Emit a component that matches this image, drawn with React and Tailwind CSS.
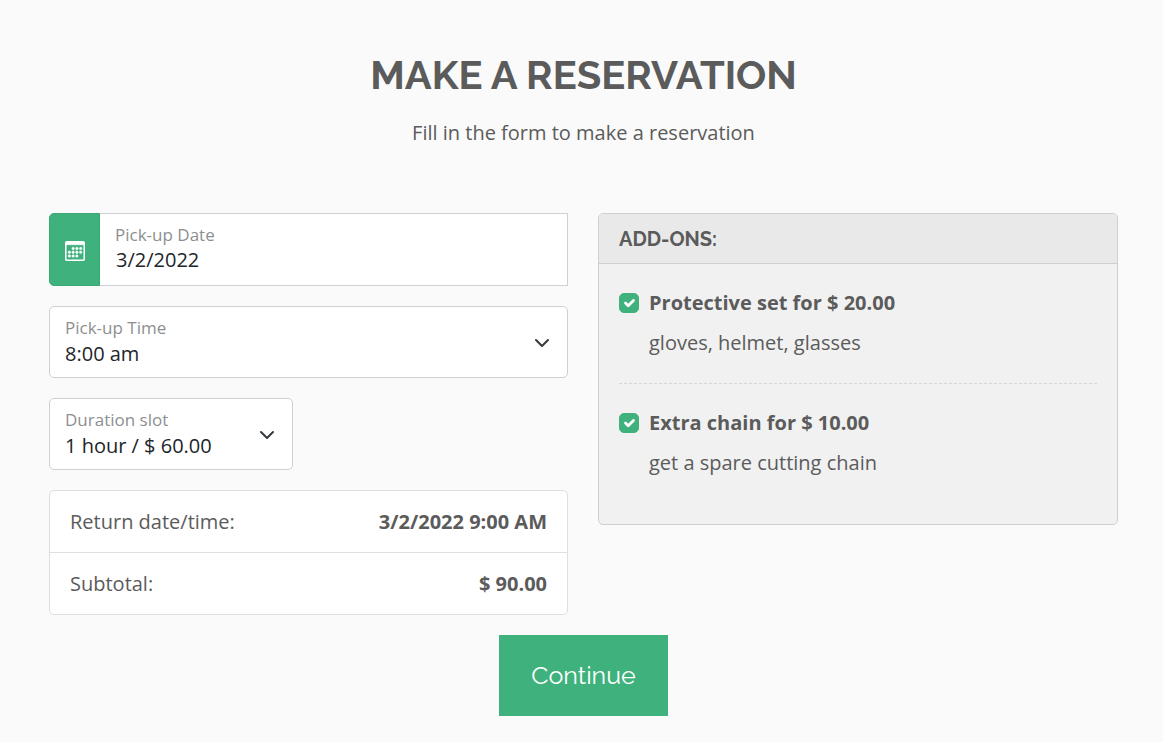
import { useState } from "react";
import { BsCalendar3 } from "react-icons/bs";

const ADD_ONS = [
  {
    id: "protective-set",
    title: "Protective set for $ 20.00",
    note: "gloves, helmet, glasses",
  },
  {
    id: "extra-chain",
    title: "Extra chain for $ 10.00",
    note: "get a spare cutting chain",
  },
];

const SUMMARY = [
  { label: "Return date/time:", value: "3/2/2022 9:00 AM" },
  { label: "Subtotal:", value: "$ 90.00" },
];

function FloatingLabel({ htmlFor, children }) {
  return (
    <label
      htmlFor={htmlFor}
      className="pointer-events-none absolute top-[9px] left-[15px] text-[17px] leading-6 text-[#8d8f91]"
    >
      {children}
    </label>
  );
}

function DateField() {
  const [date, setDate] = useState("3/2/2022");
  return (
    <div className="flex h-[73px]">
      <button
        type="button"
        aria-label="Open calendar"
        className="flex w-[51px] items-center justify-center rounded-l-[5px] border border-[#3aa775] bg-[#3eb17c] text-white"
      >
        <BsCalendar3 size={20} className="mt-[3px] stroke-white [stroke-width:0.4px]" />
      </button>
      <div className="relative grow border border-l-0 border-[#ced0d4] bg-white">
        <FloatingLabel htmlFor="pickup-date">Pick-up Date</FloatingLabel>
        <input
          id="pickup-date"
          type="text"
          value={date}
          onChange={(e) => setDate(e.target.value)}
          className="h-full w-full bg-transparent px-4 pt-5 text-[20px] text-[#212529] outline-none"
        />
      </div>
    </div>
  );
}

function SelectField({ id, label, options, className }) {
  return (
    <div
      className={`relative h-[72px] rounded-[5px] border border-[#ced0d4] bg-white ${className}`}
    >
      <FloatingLabel htmlFor={id}>{label}</FloatingLabel>
      <select
        id={id}
        className="h-full w-full appearance-none bg-transparent pt-[23px] pr-10 pl-[15px] text-[20px] text-[#212529] outline-none"
      >
        {options.map((option) => (
          <option key={option}>{option}</option>
        ))}
      </select>
      <svg
        viewBox="0 0 16 16"
        aria-hidden="true"
        className="pointer-events-none absolute top-7 right-[17px] size-4"
      >
        <path
          d="m2 5 6 6 6-6"
          fill="none"
          stroke="#343a40"
          strokeWidth="2"
          strokeLinecap="round"
          strokeLinejoin="round"
        />
      </svg>
    </div>
  );
}

function AddOn({ id, title, note }) {
  return (
    <li className="border-t border-dashed border-[#d6d6d6] pt-6 pb-[25px] first:border-t-0">
      <div className="flex items-center gap-[10px]">
        <span className="grid size-5 shrink-0">
          <input
            id={id}
            type="checkbox"
            defaultChecked
            className="peer col-start-1 row-start-1 size-5 appearance-none rounded-[5px] border border-[#bbb] bg-white checked:border-[#3eb17c] checked:bg-[#3eb17c]"
          />
          <svg
            viewBox="0 0 20 20"
            aria-hidden="true"
            className="pointer-events-none invisible col-start-1 row-start-1 size-5 peer-checked:visible"
          >
            <path
              d="m6.5 10 2.7 2.7 5.3-5.3"
              fill="none"
              stroke="#fff"
              strokeWidth="2.8"
              strokeLinecap="round"
              strokeLinejoin="round"
            />
          </svg>
        </span>
        <label htmlFor={id} className="leading-[30px] font-bold">
          {title}
        </label>
      </div>
      <p className="mt-[10px] pl-[30px] leading-[30px]">{note}</p>
    </li>
  );
}

export default function App() {
  return (
    <main className="min-h-screen bg-[#fafafa] pt-[46px] pr-[45px] pb-[26px] pl-[49px] font-['Open_Sans','Noto_Sans',sans-serif] text-[20px] text-[#5b5b5b]">
      <header className="text-center">
        <h1 className="font-['Raleway','Lato',sans-serif] text-[40px] leading-[58px] font-bold">
          MAKE A RESERVATION
        </h1>
        <p className="mt-[14px] leading-[30px]">
          Fill in the form to make a reservation
        </p>
      </header>

      <form onSubmit={(e) => e.preventDefault()} className="mt-[65px]">
        <div className="grid grid-cols-[519fr_520fr] items-start gap-[30px]">
          <div className="flex flex-col gap-5">
            <DateField />
            <SelectField
              id="pickup-time"
              label="Pick-up Time"
              options={["8:00 am", "9:00 am", "10:00 am"]}
              className="w-full"
            />
            <SelectField
              id="duration"
              label="Duration slot"
              options={["1 hour / $ 60.00", "2 hours / $ 120.00"]}
              className="w-[244px]"
            />
            <dl className="divide-y divide-[#dfdfdf] rounded-[5px] border border-[#dfdfdf] bg-white">
              {SUMMARY.map((row) => (
                <div
                  key={row.label}
                  className="flex justify-between px-5 pt-4 pb-[15px] leading-[30px]"
                >
                  <dt>{row.label}</dt>
                  <dd className="font-bold">{row.value}</dd>
                </div>
              ))}
            </dl>
          </div>

          <section className="overflow-hidden rounded-[5px] border border-[#cfcfcf] bg-[#f1f1f1]">
            <h2 className="border-b border-[#cfcfcf] bg-[#e9e9e9] px-5 pt-[11px] pb-[9px] font-['Raleway','Lato',sans-serif] leading-[29px] font-bold">
              ADD-ONS:
            </h2>
            <ul className="px-5 pb-[21px]">
              {ADD_ONS.map((item) => (
                <AddOn key={item.id} {...item} />
              ))}
            </ul>
          </section>
        </div>

        <div className="mt-5 flex justify-center">
          <button
            type="submit"
            className="bg-[#3eb17c] px-8 py-5 font-['Raleway','Lato',sans-serif] text-[25px] leading-[41px] text-white"
          >
            Continue
          </button>
        </div>
      </form>
    </main>
  );
}
